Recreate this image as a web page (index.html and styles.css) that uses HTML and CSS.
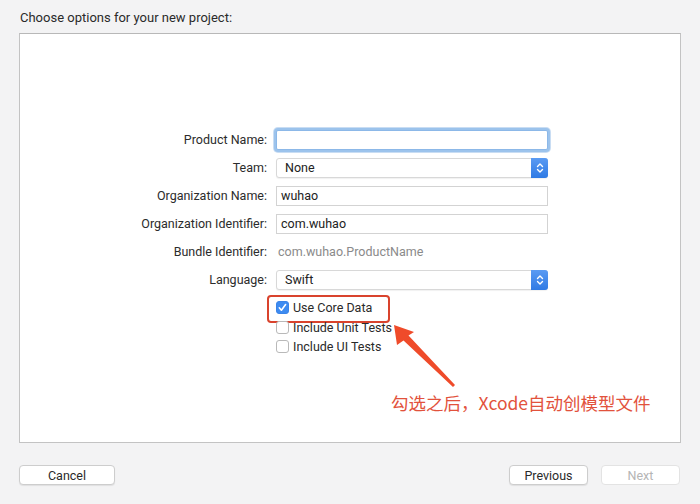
FILE: index.html
```html
<!DOCTYPE html>
<html>
<head>
<meta charset="utf-8">
<link rel="stylesheet" href="styles.css">
</head>
<body>
<div class="window">
  <div class="title">Choose options for your new project:</div>
  <div class="panel">
    <div class="form">
      <div class="label">Product Name:</div>
      <div class="field text focus"></div>

      <div class="label">Team:</div>
      <div class="field popup"><span class="val">None</span><span class="stepper"><svg width="8" height="12" viewBox="0 0 8 12"><path d="M1.5 4.5 L4 2 L6.5 4.5 M1.5 7.5 L4 10 L6.5 7.5" fill="none" stroke="#fff" stroke-width="1.4" stroke-linecap="round" stroke-linejoin="round"/></svg></span></div>

      <div class="label">Organization Name:</div>
      <div class="field text">wuhao</div>

      <div class="label">Organization Identifier:</div>
      <div class="field text">com.wuhao</div>

      <div class="label">Bundle Identifier:</div>
      <div class="plain">com.wuhao.ProductName</div>

      <div class="label">Language:</div>
      <div class="field popup"><span class="val">Swift</span><span class="stepper"><svg width="8" height="12" viewBox="0 0 8 12"><path d="M1.5 4.5 L4 2 L6.5 4.5 M1.5 7.5 L4 10 L6.5 7.5" fill="none" stroke="#fff" stroke-width="1.4" stroke-linecap="round" stroke-linejoin="round"/></svg></span></div>

      <div class="label"></div>
      <div class="checks">
        <div class="check highlighted"><span class="box on"><svg width="11" height="11" viewBox="0 0 11 11"><path d="M2.3 5.8 L4.4 8.2 L8.6 2.6" fill="none" stroke="#fff" stroke-width="1.6" stroke-linecap="round" stroke-linejoin="round"/></svg></span>Use Core Data</div>
        <div class="check"><span class="box"></span>Include Unit Tests</div>
        <div class="check"><span class="box"></span>Include UI Tests</div>
      </div>
    </div>
    <svg class="arrow" width="80" height="80" viewBox="380 315 80 80"><polygon points="393,324 413,331 407.5,334.5 454,384 452,386 402.5,339.5 396,344" fill="#ef4b2a"/></svg>
    <div class="note">勾选之后，Xcode自动创模型文件</div>
  </div>
  <div class="footer">
    <button class="btn cancel">Cancel</button>
    <div class="right">
      <button class="btn prev">Previous</button>
      <button class="btn next">Next</button>
    </div>
  </div>
</div>
</body>
</html>
```
FILE: styles.css
```css
* { box-sizing: border-box; }
html, body { margin: 0; padding: 0; }
body {
  width: 700px;
  height: 504px;
  background: #f3f3f4;
  font-family: Roboto, "Liberation Sans", sans-serif;
  font-size: 12.5px;
  color: #262626;
  overflow: hidden;
}
.window {
  display: flex;
  flex-direction: column;
  height: 504px;
}
.title {
  height: 33px;
  padding: 10px 0 0 20px;
  font-size: 13px;
  color: #2a2a2a;
}
.panel {
  position: relative;
  margin: 0 19px;
  height: 410px;
  background: #fff;
  border: 1px solid #c3c3c3;
  border-top-color: #b8b8b8;
}
.form {
  display: grid;
  grid-template-columns: 247px 272px;
  grid-auto-rows: 20px;
  column-gap: 9px;
  row-gap: 8px;
  padding-top: 96px;
}
.label {
  text-align: right;
  line-height: 20px;
  color: #2c2c2c;
}
.field {
  height: 20px;
  background: #fff;
  border: 1px solid #d3d3d3;
  line-height: 18px;
  padding-left: 4px;
  color: #222;
}
.field.focus {
  border-color: #8cb8e8;
  box-shadow: 0 0 0 2px #9cc3ec, 0 0 0 3px rgba(120,170,225,0.4);
  border-radius: 2px;
}
.popup {
  display: flex;
  justify-content: space-between;
  padding-left: 8px;
  padding-right: 0;
  border-radius: 3px;
  border-color: #d8d8d8;
  box-shadow: 0 1px 1px rgba(0,0,0,0.06);
}
.stepper {
  width: 17px;
  height: 20px;
  margin: -1px -1px 0 0;
  background: linear-gradient(#5a9bf3, #2f7ae4);
  border-radius: 0 3px 3px 0;
  display: flex;
  align-items: center;
  justify-content: center;
}
.plain {
  line-height: 20px;
  color: #8a8a8a;
  padding-left: 2px;
}
.checks {
  grid-row: span 3;
  display: flex;
  flex-direction: column;
}
.check {
  position: relative;
  display: flex;
  align-items: center;
  height: 19.5px;
  color: #2a2a2a;
}
.box {
  width: 13px;
  height: 13px;
  border: 1px solid #b9b9b9;
  border-radius: 3px;
  background: #fff;
  margin-right: 4px;
  display: flex;
  align-items: center;
  justify-content: center;
}
.box.on {
  background: #3d8bf1;
  border-color: #3a84e8;
}
.highlighted::before {
  content: "";
  position: absolute;
  left: -9px;
  top: -3px;
  width: 119px;
  height: 24px;
  border: 2px solid #d9432d;
  border-radius: 4px;
}
.arrow {
  position: absolute;
  left: 361px;
  top: 282px;
}
.note {
  position: absolute;
  left: 371px;
  top: 358px;
  font-family: "Noto Sans CJK SC", "Liberation Sans", sans-serif;
  font-size: 17.5px;
  line-height: 22px;
  color: #e2523c;
}
.footer {
  display: flex;
  justify-content: space-between;
  padding: 22px 20px 0 19px;
}
.right {
  display: flex;
  gap: 13px;
}
.btn {
  height: 20px;
  padding: 0;
  font-family: Roboto, "Liberation Sans", sans-serif;
  font-size: 12.5px;
  color: #2a2a2a;
  background: #fff;
  border: 1px solid #cdcdcd;
  border-radius: 4px;
  box-shadow: 0 1px 1px rgba(0,0,0,0.08);
}
.cancel { width: 96px; }
.prev { width: 79px; }
.next { width: 79px; color: #b5b5b5; border-color: #e3e3e3; box-shadow: none; }
```
